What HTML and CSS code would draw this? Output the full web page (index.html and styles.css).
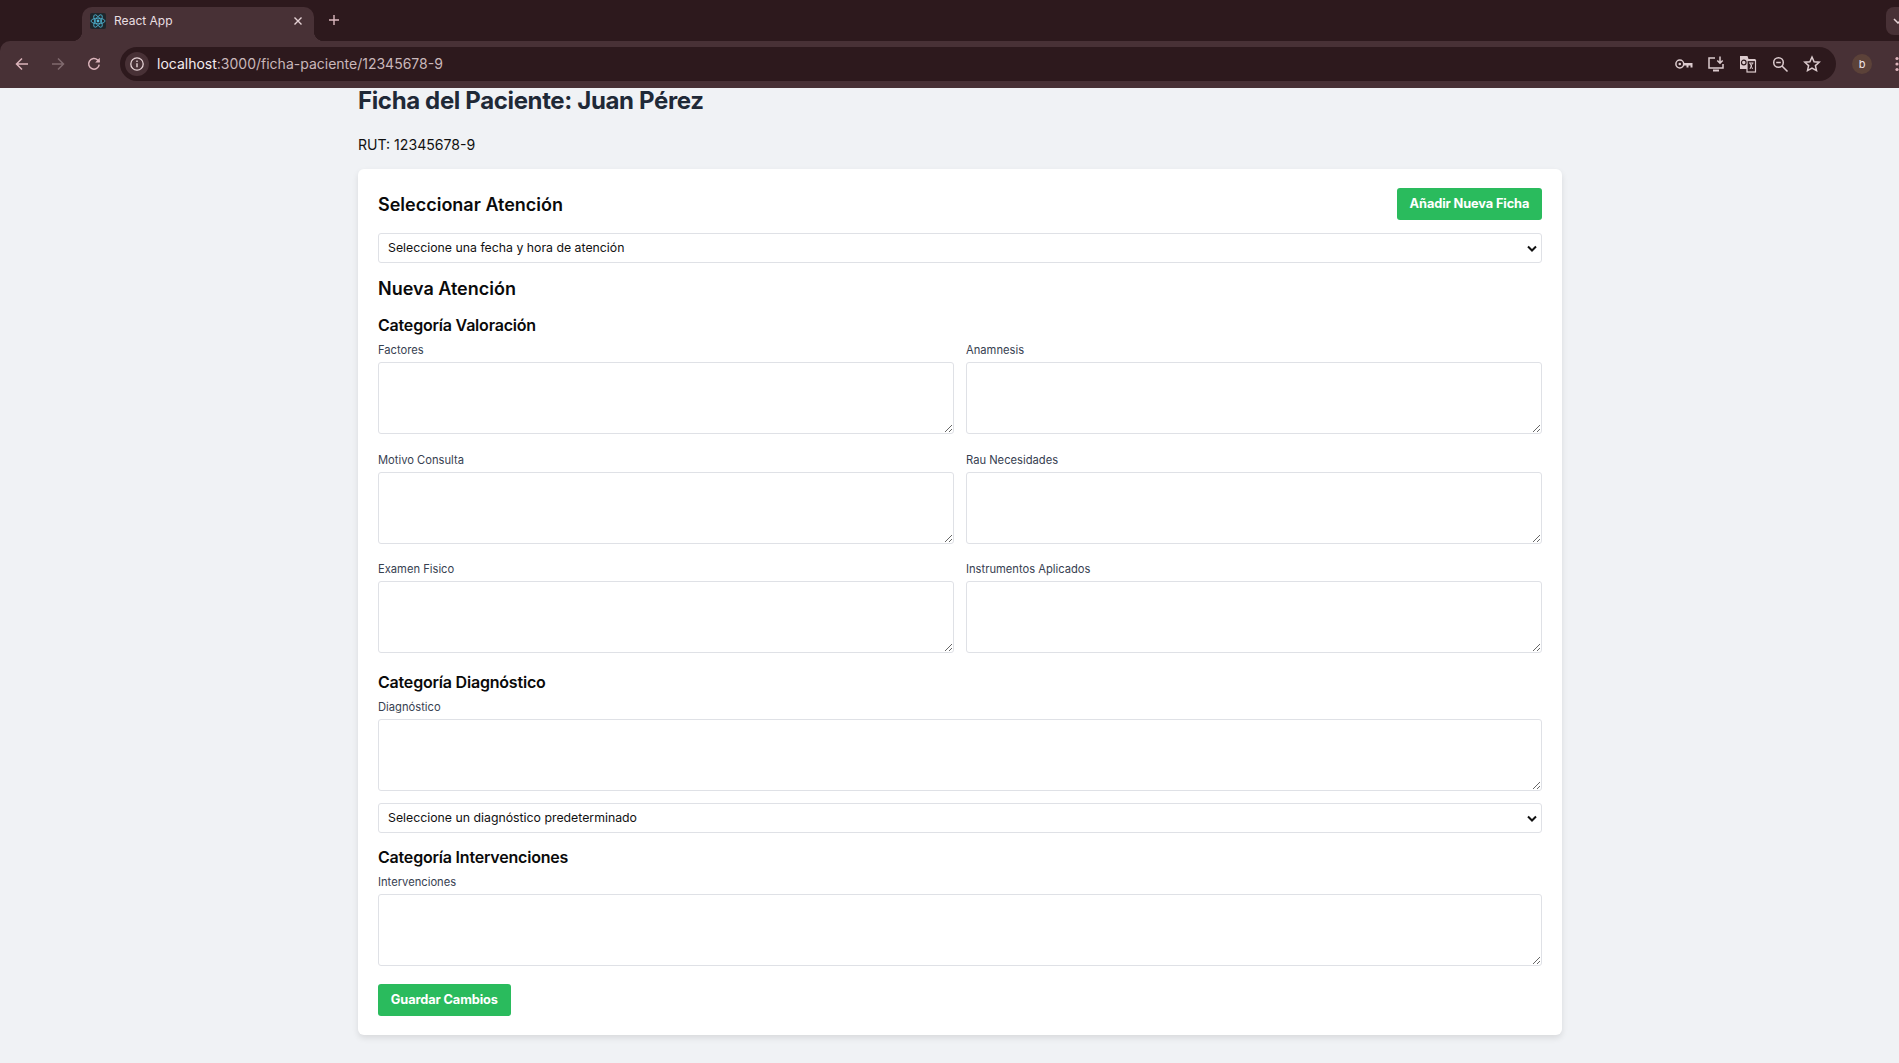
FILE: index.html
```html
<!DOCTYPE html>
<html lang="es">

<head>
    <meta charset="UTF-8">
    <title>React App</title>
    <link rel="stylesheet" href="styles.css">
</head>

<body>
    <div class="chrome">
        <div class="tabstrip">
            <div class="tab">
                <svg class="favicon" width="16" height="16" viewBox="0 0 16 16">
                    <rect width="16" height="16" rx="2" fill="#20262b" />
                    <g fill="none" stroke="#4fb8d8" stroke-width="0.8">
                        <ellipse cx="8" cy="8" rx="7" ry="2.8" />
                        <ellipse cx="8" cy="8" rx="7" ry="2.8" transform="rotate(60 8 8)" />
                        <ellipse cx="8" cy="8" rx="7" ry="2.8" transform="rotate(120 8 8)" />
                    </g>
                    <circle cx="8" cy="8" r="1.4" fill="#4fb8d8" />
                </svg>
                <span class="tab-title">React App</span>
                <svg class="tab-close" width="10" height="10" viewBox="0 0 10 10">
                    <path d="M1.5 1.5l7 7M8.5 1.5l-7 7" stroke="#e6d3d6" stroke-width="1.4" fill="none" />
                </svg>
            </div>
            <svg class="new-tab" width="12" height="12" viewBox="0 0 12 12">
                <path d="M6 1v10M1 6h10" stroke="#dcb9bf" stroke-width="1.4" fill="none" />
            </svg>
            <div class="tab-search">
                <svg width="10" height="6" viewBox="0 0 10 6">
                    <path d="M1 1l4 4 4-4" stroke="#e6d3d6" stroke-width="1.5" fill="none" />
                </svg>
            </div>
        </div>

        <div class="toolbar">
            <svg class="nav-icon" width="16" height="16" viewBox="0 0 16 16">
                <path d="M14 8H2.5M8 2.5L2.5 8 8 13.5" stroke="#dcb4bb" stroke-width="1.5" fill="none" />
            </svg>
            <svg class="nav-icon" width="16" height="16" viewBox="0 0 16 16">
                <path d="M2 8h11.5M8 2.5L13.5 8 8 13.5" stroke="#806a6e" stroke-width="1.5" fill="none" />
            </svg>
            <svg class="nav-icon" width="16" height="16" viewBox="0 0 16 16">
                <path d="M13.2 8.6A5.3 5.3 0 1 1 11.6 4L13.5 5.8" stroke="#dcb4bb" stroke-width="1.5" fill="none" />
                <path d="M13.8 1.8v4.6H9.2z" fill="#dcb4bb" />
            </svg>
            <div class="omnibox">
                <span class="site-info">
                    <svg width="16" height="16" viewBox="0 0 16 16">
                        <circle cx="8" cy="8" r="6.2" stroke="#e6d3d6" stroke-width="1.3" fill="none" />
                        <path d="M8 7.2v4M8 4.6v1.4" stroke="#e6d3d6" stroke-width="1.4" fill="none" />
                    </svg>
                </span>
                <span class="url"><span class="url-host">localhost</span>:3000/ficha-paciente/12345678-9</span>
                <span class="omni-icons">
                    <svg width="18" height="18" viewBox="0 0 18 18">
                        <circle cx="4.8" cy="9" r="3.9" stroke="#dccbce" stroke-width="1.5" fill="none" />
                        <circle cx="4.8" cy="9" r="1.3" fill="#dccbce" />
                        <path d="M8.7 8H17.5V12.5H15.5V10.5H13.5V12.5H11.5V10.5H8.7z" fill="#dccbce" />
                    </svg>
                    <svg width="18" height="18" viewBox="0 0 18 18">
                        <path d="M8 3H2v10h14v-4" stroke="#dccbce" stroke-width="1.5" fill="none" />
                        <path d="M6 15.5h6" stroke="#dccbce" stroke-width="2" fill="none" />
                        <path d="M13 1.5v6.500M10.3 5.5L13 8.2l2.7-2.7" stroke="#dccbce" stroke-width="1.5" fill="none" />
                    </svg>
                    <svg width="18" height="18" viewBox="0 0 18 18">
                        <path d="M1 1h7.5l1 3H16.5v13h-7l-1-3H1z" fill="#dccbce" />
                        <rect x="8" y="5.5" width="8.5" height="11.5" fill="#2d191d" stroke="#dccbce" stroke-width="1.2" />
                        <circle cx="4.8" cy="7.5" r="2.3" fill="none" stroke="#2d191d" stroke-width="1.2" />
                        <path d="M10 8h4.5M11 8l2.5 6M13.5 8L11 14" stroke="#dccbce" stroke-width="1" fill="none" />
                    </svg>
                    <svg width="18" height="18" viewBox="0 0 18 18">
                        <circle cx="7.5" cy="7.5" r="4.8" stroke="#dccbce" stroke-width="1.5" fill="none" />
                        <path d="M11 11l5.5 5.500M5.200 7.5h4.600" stroke="#dccbce" stroke-width="1.5" fill="none" />
                    </svg>
                    <svg width="18" height="18" viewBox="0 0 18 18">
                        <path d="M9 2l2.100 4.700 5.100.5-3.800 3.400 1.100 5L9 13l-4.500 2.600 1.100-5L1.800 7.200l5.100-.5z" stroke="#dccbce" stroke-width="1.5" fill="none" />
                    </svg>
                </span>
            </div>
            <span class="avatar">b</span>
            <svg class="menu-dots" width="4" height="16" viewBox="0 0 4 16">
                <circle cx="2" cy="2.5" r="1.6" fill="#dcb4bb" />
                <circle cx="2" cy="8" r="1.6" fill="#dcb4bb" />
                <circle cx="2" cy="13.5" r="1.6" fill="#dcb4bb" />
            </svg>
        </div>
    </div>

    <main class="page">
        <h1 class="page-title">Ficha del Paciente: Juan Pérez</h1>
        <p class="rut">RUT: 12345678-9</p>

        <div class="card">
            <div class="card-head">
                <h2>Seleccionar Atención</h2>
                <button class="btn">Añadir Nueva Ficha</button>
            </div>
            <select class="field-select">
                <option>Seleccione una fecha y hora de atención</option>
            </select>

            <h2 class="new-title">Nueva Atención</h2>

            <h3 class="cat-first">Categoría Valoración</h3>
            <div class="field-grid">
                <div>
                    <label for="factores">Factores</label>
                    <textarea id="factores"></textarea>
                </div>
                <div>
                    <label for="anamnesis">Anamnesis</label>
                    <textarea id="anamnesis"></textarea>
                </div>
                <div>
                    <label for="motivo">Motivo Consulta</label>
                    <textarea id="motivo"></textarea>
                </div>
                <div>
                    <label for="rau">Rau Necesidades</label>
                    <textarea id="rau"></textarea>
                </div>
                <div>
                    <label for="examen">Examen Fisico</label>
                    <textarea id="examen"></textarea>
                </div>
                <div>
                    <label for="instrumentos">Instrumentos Aplicados</label>
                    <textarea id="instrumentos"></textarea>
                </div>
            </div>

            <h3 class="cat-diag">Categoría Diagnóstico</h3>
            <label for="diagnostico">Diagnóstico</label>
            <textarea id="diagnostico"></textarea>
            <select class="field-select diag-select">
                <option>Seleccione un diagnóstico predeterminado</option>
            </select>

            <h3 class="cat-interv">Categoría Intervenciones</h3>
            <label for="intervenciones">Intervenciones</label>
            <textarea id="intervenciones"></textarea>

            <button class="btn save-btn">Guardar Cambios</button>
        </div>
    </main>
</body>

</html>
```

FILE: styles.css
```css
* {
    box-sizing: border-box;
}

html,
body {
    margin: 0;
    padding: 0;
    height: 100%;
    overflow: hidden;
}

body {
    font-family: Inter, "Liberation Sans", sans-serif;
    background-color: #f0f2f5;
    color: #111;
}

/* Browser chrome */
.chrome {
    background-color: #2d191d;
}

.tabstrip {
    display: flex;
    align-items: flex-end;
    height: 41px;
    padding-left: 82px;
}

.tab {
    position: relative;
    display: flex;
    align-items: center;
    flex: none;
    width: 232px;
    height: 34px;
    padding: 0 11px 7px 8px;
    background-color: #483136;
    border-radius: 10px 10px 0 0;
}

/* the concave corners at the foot of the tab */
.tab::before,
.tab::after {
    content: "";
    position: absolute;
    bottom: 0;
    width: 10px;
    height: 10px;
    background: radial-gradient(circle at var(--corner) 0, #2d191d 10px, #483136 10.5px);
}

.tab::before {
    --corner: 0;
    left: -10px;
}

.tab::after {
    --corner: 100%;
    right: -10px;
}

.favicon {
    flex: none;
}

.tab-title {
    flex: 1;
    margin-left: 8px;
    font-size: 12px;
    color: #eadfe1;
}

.tab-close {
    flex: none;
}

.new-tab {
    flex: none;
    margin: 0 0 15px 14px;
}

.tab-search {
    display: flex;
    flex: none;
    align-items: center;
    width: 28px;
    height: 28px;
    margin: 0 -15px 6px auto;
    padding-left: 7px;
    background-color: #483136;
    border-radius: 8px;
}

.toolbar {
    display: flex;
    align-items: center;
    height: 47px;
    padding: 0 0 1px 14px;
    background-color: #483136;
    border-radius: 10px 0 0 0;
}

.nav-icon {
    flex: none;
    margin-right: 20px;
}

.omnibox {
    display: flex;
    flex: none;
    align-items: center;
    width: 1716px;
    height: 34px;
    margin-left: -2px;
    padding-left: 5px;
    background-color: #2d191d;
    border-radius: 17px;
}

.site-info {
    display: flex;
    align-items: center;
    justify-content: center;
    width: 24px;
    height: 24px;
    background-color: #483136;
    border-radius: 50%;
}

.url {
    margin-left: 8px;
    font-size: 14px;
    line-height: 16px;
    padding-bottom: 1px;
    color: #c9b7ba;
}

.url-host {
    color: #f4ecee;
}

.omni-icons {
    display: flex;
    gap: 14px;
    margin-left: auto;
    padding-right: 15px;
}

.avatar {
    display: flex;
    flex: none;
    align-items: center;
    justify-content: center;
    width: 20px;
    height: 20px;
    margin-left: 16px;
    font-size: 11px;
    color: #f1e6e8;
    background-color: #5c4239;
    border-radius: 50%;
}

.menu-dots {
    flex: none;
    margin-left: 23px;
}

/* Page */
.page {
    width: 1204px;
    margin-left: 358px;
}

.page-title {
    margin: 0;
    font-size: 24px;
    line-height: 26px;
    font-weight: 700;
    letter-spacing: -0.36px;
    color: #1f2937;
}

.rut {
    margin: 21px 0 14px;
    font-size: 14.1px;
    line-height: 20px;
}

.card {
    height: 866px;
    padding: 19px 20px;
    background-color: #fff;
    border-radius: 6px;
    box-shadow: 0 3px 6px rgba(0, 0, 0, 0.1);
}

.card-head {
    display: flex;
    align-items: center;
    justify-content: space-between;
    height: 32px;
    margin-bottom: 13px;
}

.card-head h2 {
    padding-top: 2px;
}

h2 {
    margin: 0;
    font-size: 18px;
    line-height: 24px;
    font-weight: 600;
    color: #0a0a0a;
}

h3 {
    margin: 0;
    font-size: 16px;
    line-height: 20px;
    font-weight: 600;
    letter-spacing: -0.2px;
    color: #0a0a0a;
}

.btn {
    display: block;
    height: 32px;
    padding: 0 12.8px 1px;
    font-family: inherit;
    font-size: 12.8px;
    font-weight: 700;
    letter-spacing: -0.12px;
    color: #fff;
    background-color: #2abb5d;
    border: none;
    border-radius: 3px;
}

.field-select {
    display: block;
    width: 100%;
    height: 30px;
    padding: 0 24px 2px 9px;
    font-family: inherit;
    font-size: 12.3px;
    color: #111;
    appearance: none;
    background: #fff url("data:image/svg+xml,%3Csvg xmlns='http://www.w3.org/2000/svg' width='10' height='7' viewBox='0 0 10 7'%3E%3Cpath d='M1 1.5l4 4 4-4' stroke='%23111' stroke-width='2' fill='none'/%3E%3C/svg%3E") no-repeat right 4px center;
    border: 1px solid #dfe1e6;
    border-radius: 3px;
}

.new-title {
    margin-top: 13px;
    padding-top: 1px;
}

.cat-first {
    margin: 14px 0 8px;
}

.cat-diag {
    margin: 19px 0 8px;
}

.cat-interv {
    margin: 14px 0 8px;
}

.diag-select {
    margin-top: 12px;
}

.field-grid {
    display: grid;
    grid-template-columns: 1fr 1fr;
    gap: 18.5px 12px;
}

label {
    display: block;
    height: 16px;
    margin-bottom: 3px;
    font-size: 11.2px;
    line-height: 15.5px;
    color: #374151;
}

textarea {
    display: block;
    width: 100%;
    height: 72px;
    background-color: #fff;
    border: 1px solid #dfe1e6;
    border-radius: 3px;
    resize: vertical;
}

.save-btn {
    margin-top: 18px;
}
```
